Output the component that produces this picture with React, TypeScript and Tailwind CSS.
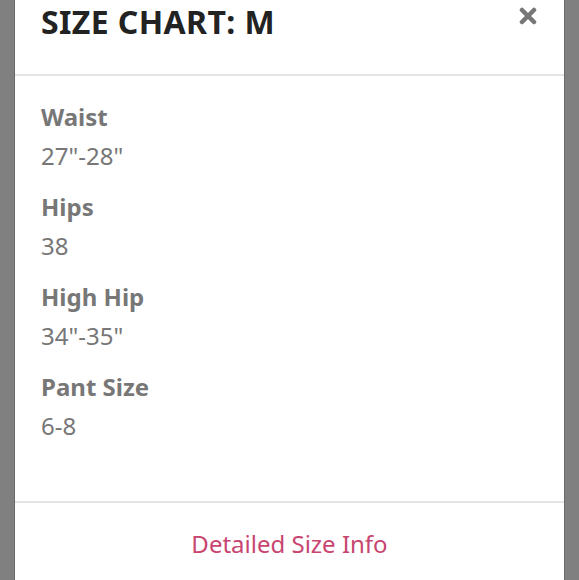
const rows = [
  { label: "Waist", value: '27"-28"' },
  { label: "Hips", value: "38" },
  { label: "High Hip", value: '34"-35"' },
  { label: "Pant Size", value: "6-8" },
];

function CloseIcon() {
  return (
    <svg width="18" height="18" viewBox="0 0 18 18" aria-hidden="true">
      <path
        d="M3 3 L15 15 M15 3 L3 15"
        stroke="#777777"
        strokeWidth="4.5"
        strokeLinecap="round"
      />
    </svg>
  );
}

export default function App() {
  return (
    <div className="h-[580px] w-full overflow-hidden bg-[#808080] px-[14px] font-['Noto_Sans',sans-serif]">
      <div className="flex h-full flex-col border-x border-[#6a6a6a] bg-white">
        {/* Header */}
        <header className="flex h-[76px] shrink-0 items-start justify-between border-b-2 border-[#e4e4e7] pl-[26px] pr-[27px]">
          <h2 className="text-[32px] leading-[44px] font-bold tracking-[0.012em] text-[#222222] uppercase">
            Size Chart: M
          </h2>
          <button className="mt-[7px]">
            <CloseIcon />
          </button>
        </header>

        {/* Body */}
        <main className="flex shrink-0 flex-col gap-[12px] border-b-2 border-[#e4e4e7] pt-[21px] pb-[56px] pl-[26px] text-[24px] leading-[39px] text-[#777777]">
          {rows.map((r) => (
            <div key={r.label}>
              <div className="font-bold">{r.label}</div>
              <div>{r.value}</div>
            </div>
          ))}
        </main>

        {/* Footer */}
        <footer className="flex justify-center pt-[23px]">
          <a href="#" className="text-[24px] leading-[36px] text-[#c8456f]">
            Detailed Size Info
          </a>
        </footer>
      </div>
    </div>
  );
}
